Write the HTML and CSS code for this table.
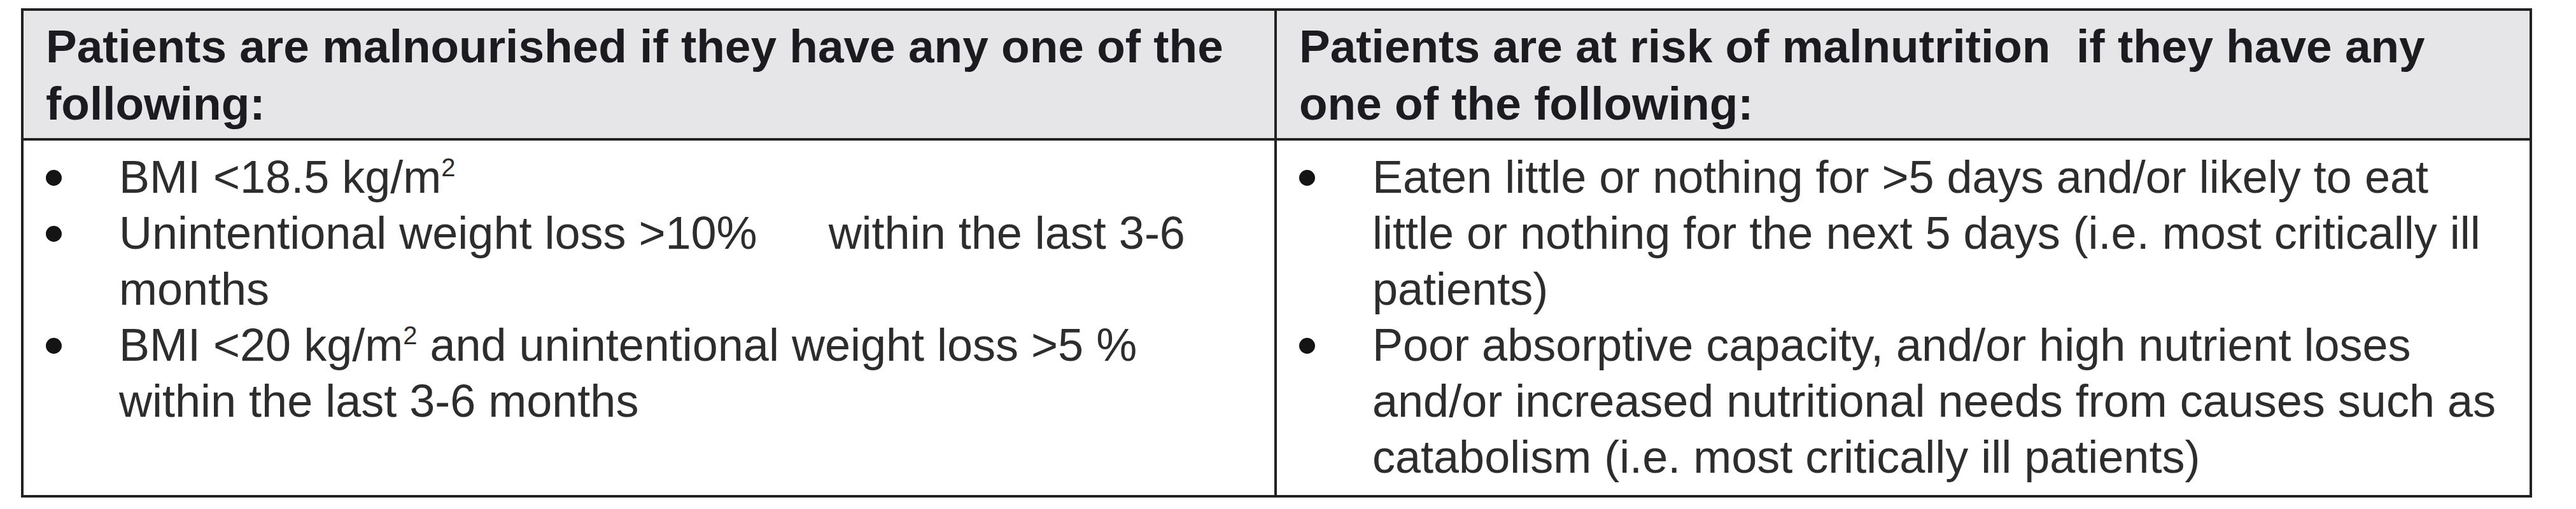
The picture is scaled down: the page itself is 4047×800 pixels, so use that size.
FILE: index.html
```html
<!DOCTYPE html>
<html lang="en">
<head>
<meta charset="utf-8">
<title>Malnutrition criteria</title>
<link rel="stylesheet" href="styles.css">
</head>
<body>
<div class="criteria">
  <div class="cell head">Patients are malnourished if they have any one of the<br>following:</div>
  <div class="cell head second">Patients are at risk of malnutrition&nbsp; if they have any<br>one of the following:</div>
  <div class="cell content">
    <ul class="list">
      <li><span class="mark"><span class="dot"></span></span><span class="txt">BMI &lt;18.5 kg/m<sup>2</sup></span></li>
      <li><span class="mark"><span class="dot"></span></span><span class="txt">Unintentional weight loss &gt;10%<span class="gap"></span>within the last 3-6<br>months</span></li>
      <li><span class="mark"><span class="dot"></span></span><span class="txt">BMI &lt;20 kg/m<sup>2</sup> and unintentional weight loss &gt;5 %<br>within the last 3-6 months</span></li>
    </ul>
  </div>
  <div class="cell content second">
    <ul class="list">
      <li><span class="mark"><span class="dot"></span></span><span class="txt">Eaten little or nothing for &gt;5 days and/or likely to eat<br>little or nothing for the next 5 days (i.e. most critically ill<br>patients)</span></li>
      <li><span class="mark"><span class="dot"></span></span><span class="txt">Poor absorptive capacity, and/or high nutrient loses<br>and/or increased nutritional needs from causes such as<br>catabolism (i.e. most critically ill patients)</span></li>
    </ul>
  </div>
</div>
</body>
</html>
```

FILE: styles.css
```css
html, body {
  background: #ffffff;
}

body {
  margin: 0;
  padding: 13px 0 0 33px;
  font-family: "Liberation Sans", Arial, sans-serif;
}

.criteria {
  display: grid;
  grid-template-columns: 1965px 1972px;
  width: max-content;
  border: 4px solid #222222;
}

.cell {
  padding-left: 35px;
  padding-right: 20px;
}

.second {
  border-left: 4px solid #222222;
}

.head {
  background: #e6e6e9;
  border-bottom: 4px solid #222222;
  padding-top: 11px;
  padding-bottom: 9px;
  font-size: 73px;
  font-weight: 700;
  line-height: 90px;
  color: #1b1b20;
  white-space: nowrap;
}

.content {
  padding-top: 13px;
  padding-bottom: 16px;
  font-size: 72px;
  line-height: 88px;
  color: #2d2d2d;
}

.list {
  margin: 0;
  padding: 0;
  list-style: none;
}

.list li {
  display: flex;
  align-items: flex-start;
}

.mark {
  flex: 0 0 115px;
  height: 88px;
  display: flex;
  align-items: flex-start;
}

.dot {
  width: 25px;
  height: 25px;
  margin-top: 33px;
  border-radius: 50%;
  background: #141414;
}

.txt {
  white-space: nowrap;
}

.gap {
  display: inline-block;
  width: 112px;
}

sup {
  font-size: 40px;
  line-height: 0;
  vertical-align: 26px;
}
```
